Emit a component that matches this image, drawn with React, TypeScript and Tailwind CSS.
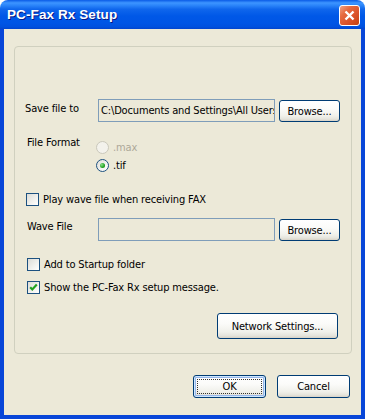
import type { ReactNode } from "react"
import clsx from "clsx"

const uiFont =
  "font-['DejaVu_Sans_Condensed','DejaVu_Sans',sans-serif] text-[11px] leading-[13px] tracking-[-0.15px] text-black"

function XpButton({
  children,
  className,
  focused,
}: {
  children: ReactNode
  className?: string
  focused?: boolean
}) {
  return (
    <div
      className={clsx(
        "flex shrink-0 items-center justify-center rounded-[3px] border border-[#003C74] bg-[linear-gradient(180deg,#FFFFFF_0%,#FBFBF9_40%,#F0F0EA_75%,#E5E4DC_90%,#D8D2C6_100%)]",
        focused && "shadow-[inset_0_0_0_1px_#CEE7FF,inset_0_0_0_2px_#97B7EA]",
        className,
      )}
    >
      {focused ? (
        <span className="flex h-[calc(100%-6px)] w-[calc(100%-6px)] items-center justify-center border border-dotted border-[#333]">
          {children}
        </span>
      ) : (
        children
      )}
    </div>
  )
}

function Checkbox({ checked }: { checked?: boolean }) {
  return (
    <span className="flex size-[13px] shrink-0 items-center justify-center border border-[#1C5180] bg-[linear-gradient(135deg,#DCDCD7_0%,#F2F2EF_60%,#FFFFFF_100%)]">
      {checked ? (
        <svg width="11" height="11" viewBox="0 0 11 11">
          <path d="M2.2 5.2 L4.3 7.4 L8.8 2.6" fill="none" stroke="#21A121" strokeWidth="2.2" />
        </svg>
      ) : null}
    </span>
  )
}

function Radio({ checked, disabled }: { checked?: boolean; disabled?: boolean }) {
  return (
    <span
      className={clsx(
        "flex size-[13px] shrink-0 items-center justify-center rounded-full border",
        disabled
          ? "border-[#CAC8BB] bg-[#F3F2EC]"
          : "border-[#1C5180] bg-[linear-gradient(135deg,#DCDCD7_0%,#F4F4F1_60%,#FFFFFF_100%)]",
      )}
    >
      {checked ? (
        <span className="size-[5px] rounded-full bg-[radial-gradient(circle_at_35%_35%,#8BE08B,#21A121_60%,#0F7A0F)]" />
      ) : null}
    </span>
  )
}

// 只读输入框：XP 风格蓝灰边，底色同对话框
function TextBox({ value }: { value?: string }) {
  return (
    <div className="flex h-[23px] w-[177px] shrink-0 items-center overflow-hidden whitespace-nowrap border border-[#7F9DB9] bg-[#ECE9D8] pl-[2px]">
      {value}
    </div>
  )
}

export default function App() {
  return (
    <div className={clsx("flex h-[419px] w-[365px] flex-col bg-white", uiFont)}>
      {/* ── title bar ── */}
      <div className="flex h-[29px] shrink-0 items-start justify-between rounded-t-[8px] bg-[linear-gradient(180deg,#0A5BE6_0%,#3D95FF_10%,#2C86FA_18%,#0F66EC_32%,#0058E7_55%,#0055E5_80%,#0051DF_92%,#0345CE_100%)] pl-[7px] pr-[5px]">
        <span className="mt-[7px] font-['Liberation_Sans',sans-serif] text-[13.5px] leading-[16px] font-bold tracking-[0.1px] text-white [text-shadow:1px_1px_0_#0A1883]">
          PC-Fax Rx Setup
        </span>
        <div className="mt-[5px] flex size-[21px] items-center justify-center rounded-[3px] border border-white bg-[linear-gradient(135deg,#F0A285_0%,#E66A40_30%,#DA5128_65%,#C4420F_100%)]">
          <svg width="11" height="11" viewBox="0 0 11 11">
            <path d="M1.5 1.5 L9.5 9.5 M9.5 1.5 L1.5 9.5" stroke="white" strokeWidth="2.4" />
          </svg>
        </div>
      </div>

      {/* ── client ── */}
      <div className="flex flex-1 flex-col border-x-4 border-b-4 border-[#0846D8] bg-[#ECE9D8]">
        <div className="mt-[17px] ml-[10px] flex h-[308px] w-[338px] flex-col rounded-[4px] border border-[#D0D0BF]">
          <div className="mt-[52px] flex items-start">
            <span className="mt-[3px] w-[83px] shrink-0 pl-[10px]">Save file to</span>
            <TextBox value="C:\Documents and Settings\All Users" />
            <XpButton className="mt-[1px] ml-[4px] h-[22px] w-[61px] border-[#002F6C]">Browse...</XpButton>
          </div>

          <div className="mt-[14px] flex items-start">
            <span className="w-[81px] shrink-0 pl-[12px] leading-[14px]">File Format</span>
            <div className="flex flex-col gap-[3px] pt-[4px]">
              <div className="flex h-[15px] items-center">
                <Radio disabled />
                <span className="ml-[4px] text-[#ACA899]">.max</span>
              </div>
              <div className="flex h-[15px] items-center">
                <Radio checked />
                <span className="ml-[4px]">.tif</span>
              </div>
            </div>
          </div>

          <div className="mt-[19px] flex h-[15px] items-center pl-[11px]">
            <Checkbox />
            <span className="ml-[4px]">Play wave file when receiving FAX</span>
          </div>

          <div className="mt-[11px] flex items-start">
            <span className="mt-[2px] w-[83px] shrink-0 pl-[12px]">Wave File</span>
            <TextBox />
            <XpButton className="mt-[1px] ml-[4px] h-[22px] w-[61px]">Browse...</XpButton>
          </div>

          <div className="mt-[16px] flex h-[15px] items-center pl-[12px]">
            <Checkbox />
            <span className="ml-[4px]">Add to Startup folder</span>
          </div>

          <div className="mt-[8px] flex h-[15px] items-center pl-[12px]">
            <Checkbox checked />
            <span className="ml-[4px]">Show the PC-Fax Rx setup message.</span>
          </div>

          <XpButton className="mt-[18px] ml-[202px] h-[26px] w-[121px]">Network Settings...</XpButton>
        </div>

        {/* ── dialog buttons ── */}
        <div className="mt-[21px] flex justify-end gap-[11px] pr-[11px]">
          <XpButton focused className="h-[23px] w-[73px]">
            OK
          </XpButton>
          <XpButton className="h-[23px] w-[73px]">Cancel</XpButton>
        </div>
      </div>
    </div>
  )
}
